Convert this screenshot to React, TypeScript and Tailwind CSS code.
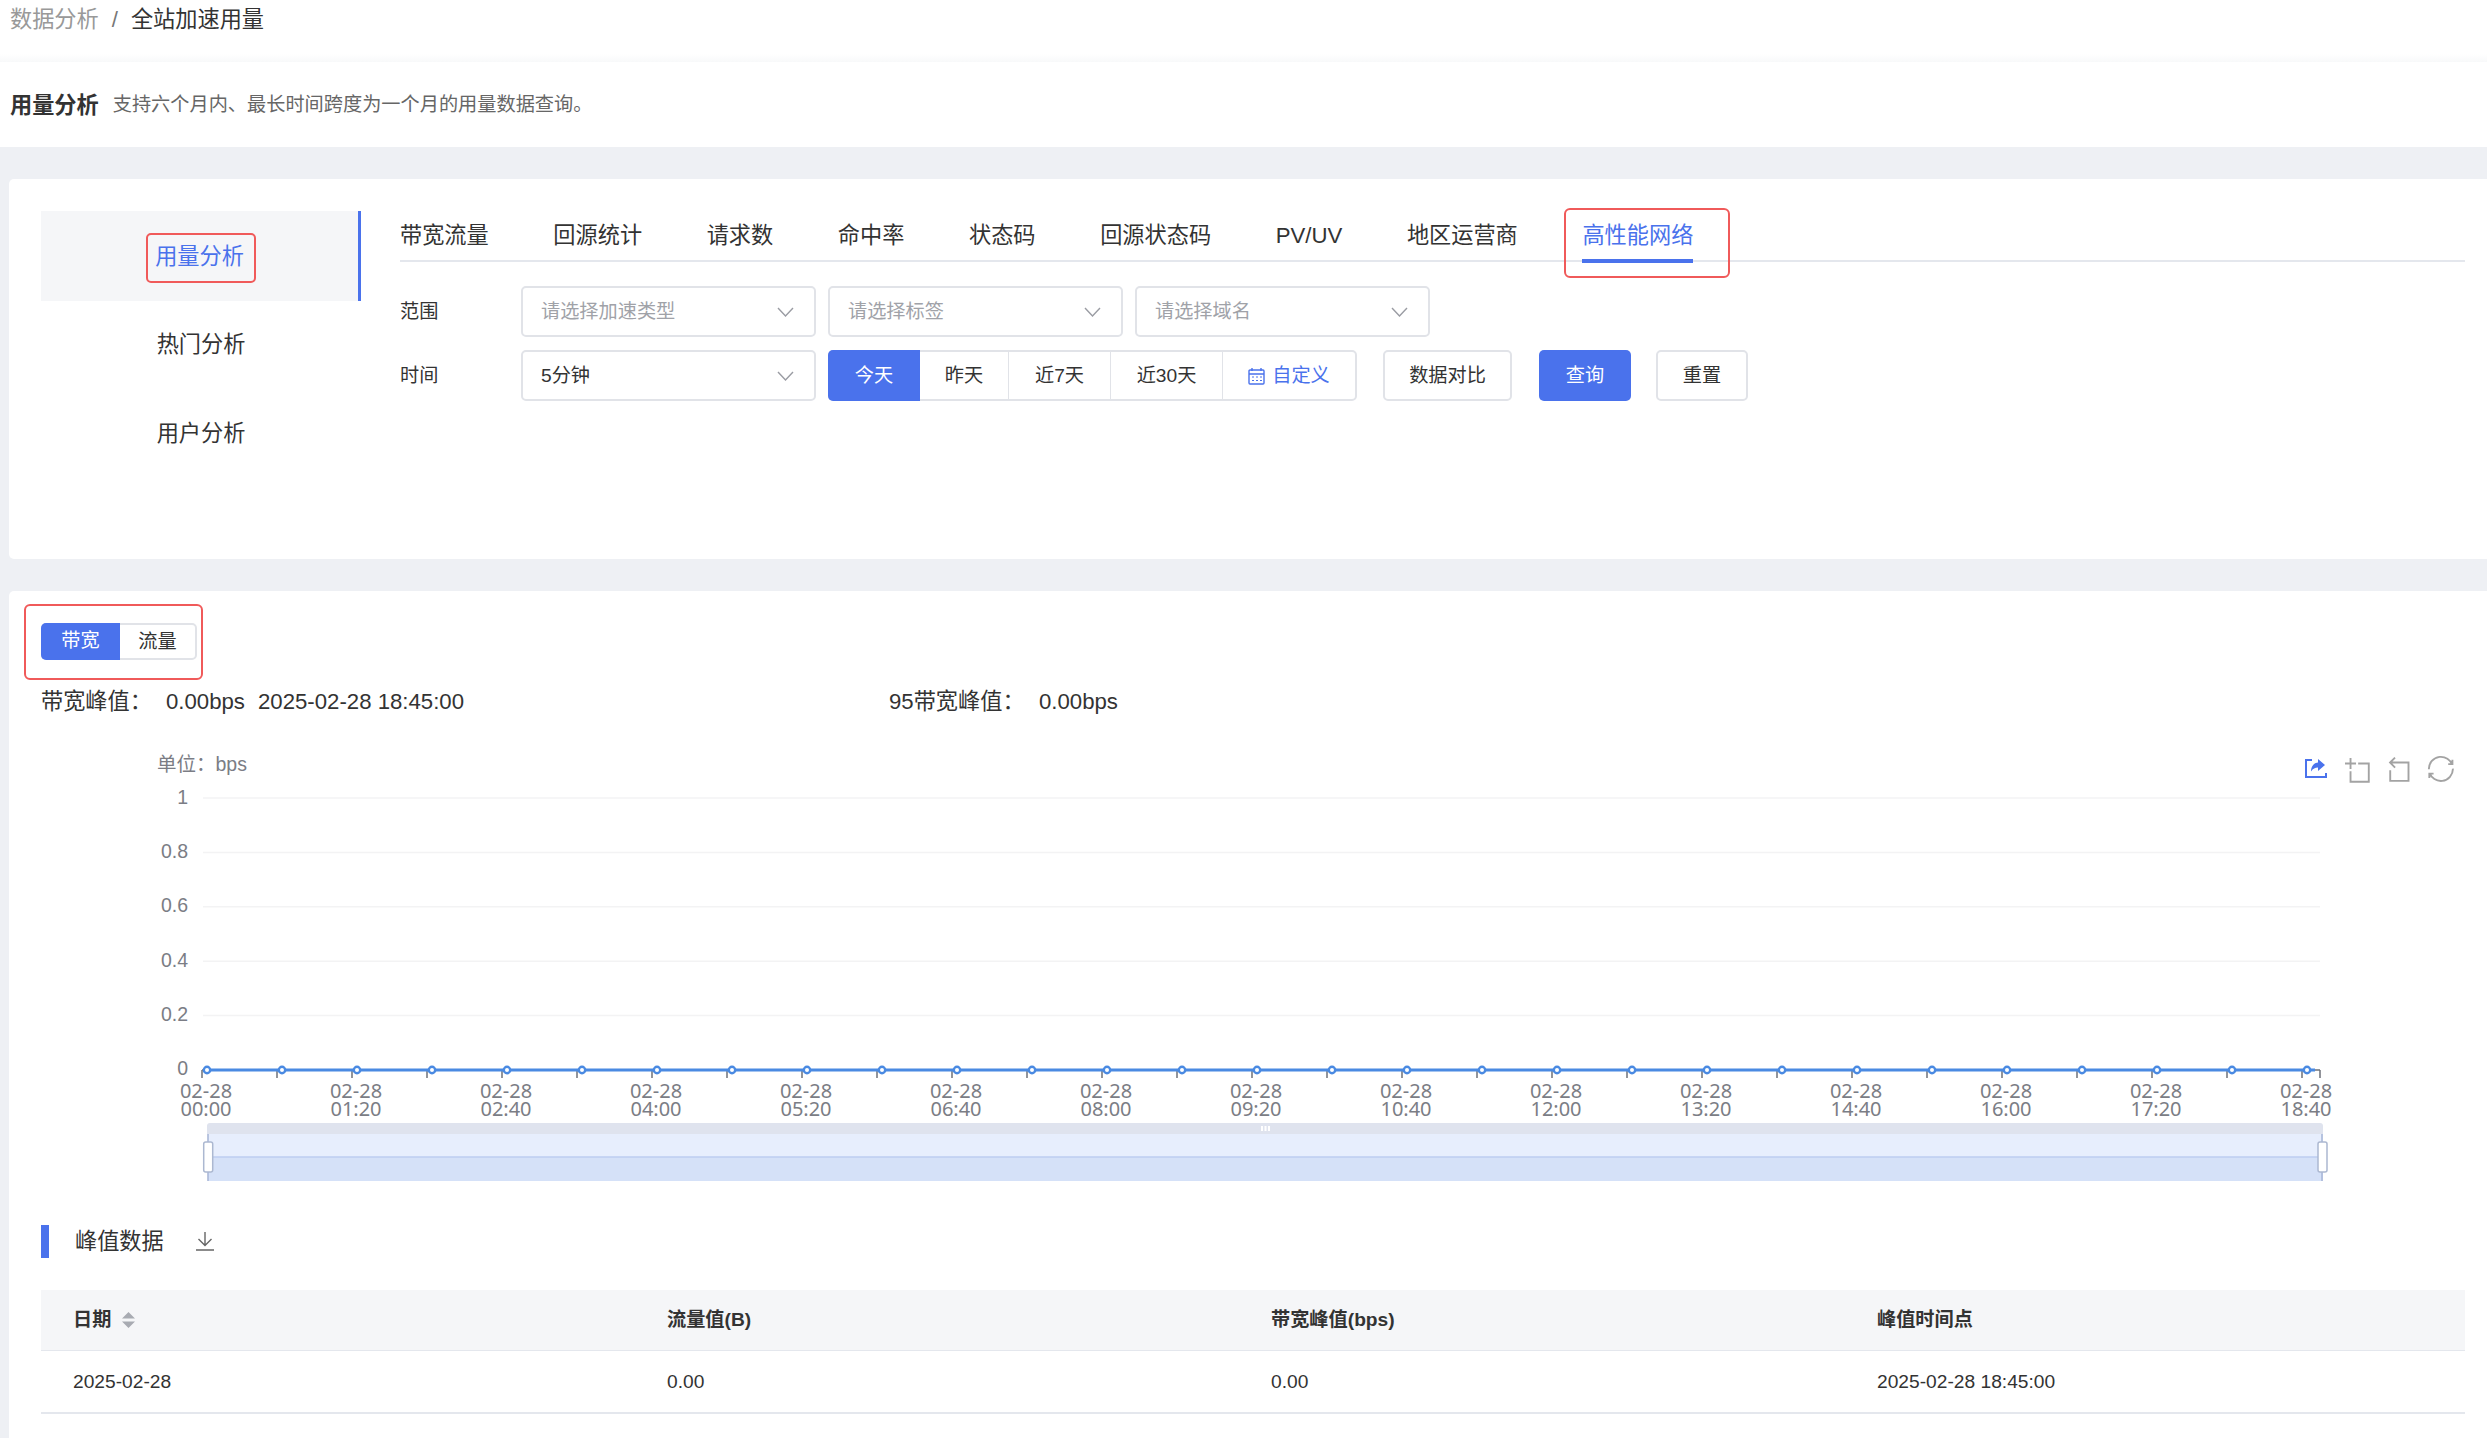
const FONT = "font-['Liberation_Sans','Noto_Sans_CJK_SC',sans-serif]";

const tabs = ["带宽流量", "回源统计", "请求数", "命中率", "状态码", "回源状态码", "PV/UV", "地区运营商"];
const times = ["00:00", "01:20", "02:40", "04:00", "05:20", "06:40", "08:00", "09:20", "10:40", "12:00", "13:20", "14:40", "16:00", "17:20", "18:40"];
const yLabels = [
  { label: "1", y: 798 },
  { label: "0.8", y: 852.4 },
  { label: "0.6", y: 906.8 },
  { label: "0.4", y: 961.2 },
  { label: "0.2", y: 1015.6 },
];

const Chevron = () => (
  <svg width="17" height="10" viewBox="0 0 17 10" fill="none" stroke="#9a9ca3" strokeWidth="1.4">
    <path d="M1 1l7.5 8L16 1" />
  </svg>
);

const SelectBox = ({ text, placeholder }: { text: string; placeholder?: boolean }) => (
  <div className="w-[295px] h-[51px] pl-[18px] pr-[20px] pt-[1px] flex items-center justify-between border-2 border-[#e1e3e8] rounded-[5px] bg-white">
    <span className={placeholder ? "text-[#a0a2a8]" : "text-[#333]"}>{text}</span>
    <Chevron />
  </div>
);

const Chart = () => {
  const ticks = Array.from({ length: 29 }, (_, i) => 202 + i * 75);
  const points = Array.from({ length: 29 }, (_, i) => 207 + i * 75);
  return (
    <svg className="block" width="2478" height="445" viewBox="9 745 2478 445">
      <text x="157" y="771" fontSize="19.5" fill="#7b7d85">单位：bps</text>
      {yLabels.map((l) => (
        <g key={l.label}>
          <line x1="203" x2="2320" y1={l.y} y2={l.y} stroke="#f3f3f4" strokeWidth="1.5" />
          <text x="188" y={l.y + 5.5} fontSize="19.5" fill="#7b7d85" textAnchor="end">{l.label}</text>
        </g>
      ))}
      <text x="188" y="1075" fontSize="19.5" fill="#7b7d85" textAnchor="end">0</text>
      <line x1="202" x2="2320" y1="1070" y2="1070" stroke="#6e7079" strokeWidth="1.5" />
      {ticks.map((x) => (
        <line key={x} x1={x} x2={x} y1="1070" y2="1078" stroke="#6e7079" strokeWidth="1.5" />
      ))}
      <line x1="2320" x2="2320" y1="1070" y2="1078" stroke="#6e7079" strokeWidth="1.5" />
      <line x1="207" x2="2315" y1="1070" y2="1070" stroke="#4a8ae2" strokeWidth="3.2" />
      {points.map((x) => (
        <circle key={x} cx={x} cy="1070" r="3.2" fill="#fff" stroke="#4a8ae2" strokeWidth="2.4" />
      ))}
      {times.map((t, i) => (
        <text key={t} fontSize="20" fill="#7b7d85" textAnchor="middle" className="font-['Noto_Sans',sans-serif]">
          <tspan x={207 - 1 + i * 150} y="1098">02-28</tspan>
          <tspan x={207 - 1 + i * 150} y="1116">{t}</tspan>
        </text>
      ))}

      {/* data zoom slider */}
      <path d="M207 1134v-8q0-3 3-3h2110q3 0 3 3v8z" fill="#dfe3ee" />
      <path d="M1262 1126v5M1265.500 1126v5M1269 1126v5" stroke="#fff" strokeWidth="2" />
      <rect x="208" y="1134" width="2115" height="23" fill="#e7eefd" />
      <rect x="208" y="1157" width="2115" height="24" fill="#d5e1f8" />
      <line x1="208" x2="2323" y1="1157" y2="1157" stroke="#bccdf0" strokeWidth="1.4" />
      <line x1="208" x2="208" y1="1134" y2="1181" stroke="#aab8d8" strokeWidth="1.6" />
      <line x1="2322" x2="2322" y1="1134" y2="1181" stroke="#aab8d8" strokeWidth="1.6" />
      <rect x="203.7" y="1142" width="9" height="30" rx="2" fill="#fff" stroke="#acb8d1" strokeWidth="1.5" />
      <rect x="2318" y="1142" width="9" height="30" rx="2" fill="#fff" stroke="#acb8d1" strokeWidth="1.5" />

      {/* toolbox */}
      <path d="M2312 760h-6v17h20v-4" fill="none" stroke="#4a72ec" strokeWidth="2" />
      <path d="M2318 759l7 6-7 6v-3.5c-3 0-5 1-7 4 0-4 2-8.500 7-9z" fill="#4a72ec" />
      <g transform="translate(2345 758) scale(0.41)" fill="none" stroke="#a3a3a3" strokeWidth="4.6">
        <path d="M0,13.5h26.9 M13.5,26.9V0 M32.1,13.5H58V58H13.5 V32.1" />
      </g>
      <g transform="translate(2386 757) scale(0.41)" fill="none" stroke="#a3a3a3" strokeWidth="4.6">
        <path d="M22,1.4L9.900,13.5l12.3,12.3 M10.3,13.5H54.900v44.600 H10.3v-26" />
      </g>
      <g transform="translate(2428 756) scale(0.43)" fill="none" stroke="#a3a3a3" strokeWidth="4.400">
        <path d="M47,18.900h9.800V8.700 M56.300,20.100 C52.100,9,40.500,0.600,26.800,2.100C12.600,3.700,1.600,16.200,2.100,30.600 M13,41.100H3.100v10.200 M3.700,39.900c4.200,11.100,15.800,19.500,29.500,18 c14.200-1.600,25.200-14.100,24.700-28.500" />
      </g>
    </svg>
  );
};

export default function App() {
  return (
    <div className={`${FONT} w-full h-[1438px] overflow-hidden bg-[#eef0f4] text-[#333] text-[19.2px]`}>
      {/* breadcrumb */}
      <div className="bg-white h-[54px] pl-[10px] pt-[4px] leading-[32px] text-[22.2px]">
        <span className="text-[#999]">数据分析</span>
        <span className="text-[#777] mx-[13px]">/</span>
        <span>全站加速用量</span>
      </div>
      <div className="h-[8px] bg-linear-to-b from-white to-[#f8f9fa]" />

      <div className="bg-white h-[85px] px-[10px] pt-[2px] flex items-center gap-[14px]">
        <span className="font-bold text-[22.2px]">用量分析</span>
        <span className="text-[#666]">支持六个月内、最长时间跨度为一个月的用量数据查询。</span>
      </div>

      {/* query card */}
      <div className="mt-[32px] ml-[9px] h-[380px] rounded-l-[5px] bg-white pt-[32px] pl-[32px] pr-[22px] flex">
        <div className="w-[320px] shrink-0 text-[22.2px]">
          <div className="relative h-[90px] pt-[2px] bg-[#f5f6f8] border-r-[3px] border-[#4a72ec] flex items-center justify-center text-[#4a72ec]">
            用量分析
            <div className="absolute left-[105px] top-[22px] w-[110px] h-[50px] border-2 border-[#f05a5a] rounded-[5px]" />
          </div>
          <div className="h-[88px] flex items-center justify-center">热门分析</div>
          <div className="h-[90px] flex items-center justify-center">用户分析</div>
        </div>

        <div className="ml-[39px] flex-1">
          <div className="flex h-[51px] gap-[64.6px] border-b-2 border-[#e4e7ed] text-[22.2px] leading-[50px]">
            {tabs.map((t) => (
              <div key={t}>{t}</div>
            ))}
            <div className="relative h-[52px] text-[#4a72ec]">
              高性能网络
              <div className="absolute left-0 right-0 top-[48px] h-[4px] bg-[#4a72ec]" />
              <div className="absolute -left-[18px] -right-[37px] -top-[3px] h-[70px] border-2 border-[#f05a5a] rounded-[6px]" />
            </div>
          </div>

          <div className="mt-[24px] flex items-center">
            <div className="w-[121px] pt-[2px]">范围</div>
            <div className="flex gap-[12px]">
              <SelectBox text="请选择加速类型" placeholder />
              <SelectBox text="请选择标签" placeholder />
              <SelectBox text="请选择域名" placeholder />
            </div>
          </div>

          <div className="mt-[13px] flex items-center">
            <div className="w-[121px] pt-[2px]">时间</div>
            <SelectBox text="5分钟" />
            <div className="ml-[12px] flex h-[51px] border-2 border-[#e1e3e8] rounded-[5px]">
              <div className="w-[92px] -my-[2px] -ml-[2px] pt-[1px] rounded-l-[5px] bg-[#4a72ec] text-white flex items-center justify-center">今天</div>
              <div className="w-[89px] pt-[1px] border-r border-[#e1e3e8] flex items-center justify-center">昨天</div>
              <div className="w-[102px] pt-[1px] border-r border-[#e1e3e8] flex items-center justify-center">近7天</div>
              <div className="w-[112px] pt-[1px] border-r border-[#e1e3e8] flex items-center justify-center">近30天</div>
              <div className="w-[132px] pt-[1px] flex items-center justify-center gap-[7px] text-[#4a72ec]">
                <svg width="17" height="17" viewBox="0 0 17 17" fill="none" stroke="#4a72ec" strokeWidth="1.4">
                  <rect x="1" y="2" width="15" height="14" rx="1" />
                  <path d="M1 6h15M4 0v3M13 0v3" />
                  <path d="M4 9h2M8 9h2M12 9h2M4 12.500h2M8 12.500h2M12 12.500h2" strokeWidth="1.2" />
                </svg>
                自定义
              </div>
            </div>
            <div className="ml-[26px] w-[129px] h-[51px] pt-[1px] border-2 border-[#e1e3e8] rounded-[5px] flex items-center justify-center">数据对比</div>
            <div className="ml-[27px] w-[92px] h-[51px] pt-[1px] bg-[#4a72ec] text-white rounded-[5px] flex items-center justify-center">查询</div>
            <div className="ml-[25px] w-[92px] h-[51px] pt-[1px] border-2 border-[#e1e3e8] rounded-[5px] flex items-center justify-center">重置</div>
          </div>
        </div>
      </div>

      {/* result card */}
      <div className="mt-[32px] ml-[9px] h-[847px] rounded-tl-[5px] bg-white">
        <div className="pt-[32px] pl-[32px]">
          <div className="relative flex w-[156px] h-[37px] pt-[1px] border-2 border-[#e1e3e8] rounded-[5px]">
            <div className="w-[79px] -my-[2px] -mt-[3px] -ml-[2px] rounded-l-[5px] bg-[#4a72ec] text-white flex items-center justify-center">带宽</div>
            <div className="flex-1 flex items-center justify-center">流量</div>
            <div className="absolute -left-[19px] -top-[21px] w-[179px] h-[76px] border-2 border-[#f05a5a] rounded-[6px]" />
          </div>
          <div className="mt-[28px] flex h-[28px] items-center text-[22.2px]">
            <span className="w-[125px]">带宽峰值：</span>
            <span className="w-[92px]">0.00bps</span>
            <span className="w-[631px]">2025-02-28 18:45:00</span>
            <span className="w-[150px]">95带宽峰值：</span>
            <span>0.00bps</span>
          </div>
        </div>

        <div className="mt-[29px]">
          <Chart />
        </div>

        <div className="mt-[35px] pl-[32px] pr-[22px]">
          <div className="flex items-center h-[33px] border-l-[8px] border-[#4a72ec] pl-[26px] gap-[32px] text-[22.2px]">
            峰值数据
            <svg width="18" height="19" viewBox="0 0 18 19" fill="none" stroke="#666" strokeWidth="1.4">
              <path d="M9 0v13M2.500 7L9 13.500 15.500 7M0 18h18" />
            </svg>
          </div>

          <div className="mt-[32px] grid grid-cols-[594px_604px_606px_1fr] h-[61px] items-center bg-[#f5f6f8] border-b border-[#e4e7ed] font-bold">
            <div className="pl-[32px] flex items-center gap-[11px]">
              日期
              <svg width="13" height="16" viewBox="0 0 13 16" fill="#a8abb2">
                <path d="M6.500 0L13 6.500H0zM0 9.500h13L6.500 16z" />
              </svg>
            </div>
            <div className="pl-[32px]">流量值(B)</div>
            <div className="pl-[32px]">带宽峰值(bps)</div>
            <div className="pl-[32px]">峰值时间点</div>
          </div>
          <div className="grid grid-cols-[594px_604px_606px_1fr] h-[63px] pt-[1px] items-center border-b-2 border-[#e4e7ed]">
            <div className="pl-[32px]">2025-02-28</div>
            <div className="pl-[32px]">0.00</div>
            <div className="pl-[32px]">0.00</div>
            <div className="pl-[32px]">2025-02-28 18:45:00</div>
          </div>
        </div>
      </div>
    </div>
  );
}
